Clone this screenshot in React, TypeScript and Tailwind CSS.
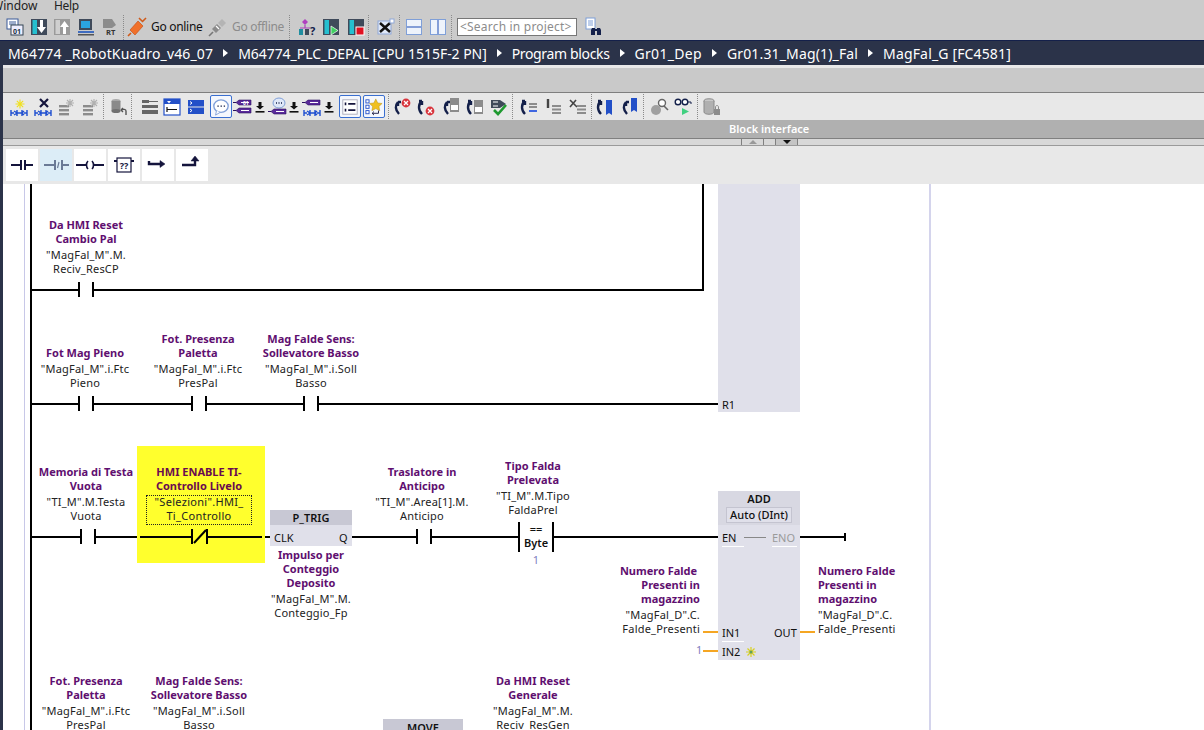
import type { ReactNode } from 'react';

const FONT = "font-['Noto_Sans','Open_Sans',sans-serif]";

const Ico = ({ className = 'w-6', children }: { className?: string; children: ReactNode }) => (
  <div className={`flex shrink-0 items-center justify-center ${className}`}>
    <svg width="20" height="20" viewBox="0 0 20 20">{children}</svg>
  </div>
);

const Sep = ({ className = '' }: { className?: string }) => (
  <div className={`h-[25px] w-px shrink-0 border-l border-dotted border-[#8a8a8a] ${className}`} />
);

// little helpers for the recurring icon parts
const Fbk = ({ c = '#1f4fd0' }: { c?: string }) => (
  <path d="M2 13v6M8 13v6M13 13v6M18 13v6M2 16h3M5 14l3 2-3 2M15 16h3M15 14l-2 2 2 2M8 16h5" stroke={c} strokeWidth="1.4" fill="none" />
);
const Tag = ({ y, c = '#5a2a9a' }: { y: number; c?: string }) => (
  <g>
    <path d={`M6 ${y}h12v5H6l-3-2.5z`} fill={c} stroke="#2a1060" strokeWidth="0.6" />
    <path d={`M8 ${y + 2.5}h8`} stroke="#fff" strokeWidth="1" />
    <path d={`M0 ${y + 2.5}h3`} stroke="#2a1060" strokeWidth="1" />
  </g>
);
const Star = ({ x, y, r = 3.5 }: { x: number; y: number; r?: number }) => (
  <g stroke="#f0e020" strokeWidth="1.2">
    <path d={`M${x - r} ${y}h${r * 2}M${x} ${y - r}v${r * 2}M${x - r * 0.7} ${y - r * 0.7}l${r * 1.4} ${r * 1.4}M${x + r * 0.7} ${y - r * 0.7}l${-r * 1.4} ${r * 1.4}`} />
  </g>
);
const GrayRows = ({ y = 8 }: { y?: number }) => (
  <g fill="#8c8c8c">
    <rect x="2" y={y} width="10" height="2.4" />
    <rect x="2" y={y + 4} width="10" height="2.4" />
    <rect x="2" y={y + 8} width="10" height="2.4" />
  </g>
);
const Spark = ({ x, y, c = '#b0b0b0' }: { x: number; y: number; c?: string }) => (
  <g stroke={c} strokeWidth="1.1">
    <path d={`M${x - 4} ${y}h8M${x} ${y - 4}v8M${x - 3} ${y - 3}l6 6M${x + 3} ${y - 3}l-6 6`} />
  </g>
);
const Hook = ({ flip = false }: { flip?: boolean }) => (
  <path
    d={flip ? 'M6 4C2 7 2 13 6 17M6 4L3 4M6 4L6 8' : 'M6 5C3 8 3 13 7 17M6 5L9 5M6 5L6 9'}
    stroke="#14204a"
    strokeWidth="2.4"
    fill="none"
  />
);
const Err = ({ x, y }: { x: number; y: number }) => (
  <g>
    <circle cx={x} cy={y} r="4.4" fill="#d8353d" />
    <path d={`M${x - 2} ${y - 2}l4 4M${x + 2} ${y - 2}l-4 4`} stroke="#fff" strokeWidth="1.3" />
  </g>
);
const Split = ({ v }: { v?: boolean }) => (
  <g>
    <rect x="2.5" y="2.5" width="15" height="15" fill="#eef3fb" stroke="#7f9fd8" strokeWidth="1" />
    {v ? <path d="M10 3v14" stroke="#3f66c0" strokeWidth="1.2" /> : <path d="M3 10h14" stroke="#3f66c0" strokeWidth="1.2" />}
  </g>
);
const PlcBox = ({ gray, children }: { gray?: boolean; children?: ReactNode }) => (
  <g>
    <rect x="2" y="2" width="16" height="16" fill={gray ? '#9a9a9a' : '#3f4a5a'} />
    <rect x="3.5" y="3" width="4.5" height="14" fill={gray ? '#cfcfcf' : '#25c0d0'} />
    {children}
  </g>
);
const OnBtn = ({ className = '', children }: { className?: string; children: ReactNode }) => (
  <div className={`flex h-[23px] w-[22px] shrink-0 items-center justify-center rounded-[2px] border border-[#3a6fd0] bg-[#f4f7fd] ${className}`}>
    <svg width="18" height="18" viewBox="0 0 20 20">{children}</svg>
  </div>
);
const PullDown = () => (
  <svg width="10" height="12" viewBox="0 0 10 12" className="shrink-0">
    <path d="M3.5 1h3v4H9L5 8.5 1 5h2.500z" fill="#111" />
    <rect x="0.5" y="10" width="9" height="1.600" fill="#111" />
  </svg>
);

const InstrBtn = ({ active, children }: { active?: boolean; children: ReactNode }) => (
  <div className={`flex h-8 w-8 items-center justify-center ${active ? 'bg-[#dcedf7]' : 'bg-white'}`}>
    <svg width="32" height="32" viewBox="0 0 32 32" fill="none" stroke={active ? '#6a7a96' : '#14143c'} strokeWidth="2">
      {children}
    </svg>
  </div>
);

const Crumb = ({ className = '', children }: { className?: string; children: ReactNode }) => (
  <span className={`whitespace-pre ${className}`}>{children}</span>
);
const CrumbArrow = () => (
  <span className="h-0 w-0 shrink-0 border-y-[4px] border-l-[5px] border-y-transparent border-l-white" />
);

// text attached to an instruction on the network canvas
const Label = ({
  className,
  title,
  op,
  align = 'text-center',
}: {
  className: string;
  title: string[];
  op: string[];
  align?: string;
}) => (
  <div className={`absolute text-[11px] leading-[14px] ${align} ${className}`}>
    {title.map((t) => (
      <div key={t} className="whitespace-pre font-bold text-[#5f0f70]">{t}</div>
    ))}
    <div className="mt-[2px] tracking-[0.2px] text-[#222]">
      {op.map((t) => (
        <div key={t} className="whitespace-pre">{t}</div>
      ))}
    </div>
  </div>
);

const Pin = ({ className, children }: { className: string; children: ReactNode }) => (
  <div className={`absolute text-[11px] leading-[14px] ${className}`}>{children}</div>
);
const Wire = ({ className }: { className: string }) => <div className={`absolute h-[2px] bg-black ${className}`} />;
const Bar = ({ className }: { className: string }) => <div className={`absolute w-[2px] bg-black ${className}`} />;

export default function App() {
  return (
    <div className={`flex h-[730px] w-[1204px] flex-col overflow-hidden bg-[#cbcbcb] ${FONT}`}>
      {/* menu */}
      <div className="flex h-[12px] items-center text-[12px] leading-[12px] text-[#222]">
        <span className="-ml-[8px] w-[62px]">Window</span>
        <span className="tracking-[-0.3px]">Help</span>
      </div>

      {/* main toolbar */}
      <div className="flex h-[28px] items-center pt-[2px]">
        <div className="ml-[3px] flex items-center">
          <Ico>
            <rect x="2" y="2" width="11" height="10" fill="#fff" stroke="#3a5a9a" />
            <path d="M4 5h7M4 7h7" stroke="#3a5a9a" />
            <rect x="6" y="8" width="12" height="10" fill="#eef" stroke="#345" />
            <text x="8" y="16.500" fontSize="7" fontWeight="700" fill="#234">01</text>
          </Ico>
          <Ico>
            <PlcBox><path d="M11 3h3v7h3l-4.500 6L8 10h3z" fill="#fff" /></PlcBox>
          </Ico>
          <Ico className="w-[22px]">
            <PlcBox gray><path d="M11 17h3v-7h3l-4.500-6L8 10h3z" fill="#fff" /></PlcBox>
          </Ico>
          <Ico className="w-[25px]">
            <rect x="3" y="2" width="13" height="11" fill="#3f4a5a" />
            <rect x="5" y="4" width="9" height="7" fill="#2aa4e0" />
            <rect x="2" y="14" width="16" height="2" fill="#3f6cc0" />
            <rect x="2" y="17" width="16" height="1.500" fill="#555" />
          </Ico>
          <Ico className="w-[23px]">
            <path d="M3 2h9l4 6-4 3H3z" fill="#8c8c8c" />
            <text x="6" y="18" fontSize="7.500" fontWeight="700" fill="#333">RT</text>
          </Ico>
        </div>
        <Sep className="ml-[2px]" />
        <Ico className="ml-[2px] w-[22px]">
          <path d="M3 13l8-9 5 5-8 9z" fill="#f0702a" stroke="#c04a10" strokeWidth="0.6" />
          <path d="M1 19l3-3M15 5l4-4M12 1l3 3" stroke="#d05a1a" strokeWidth="1.6" />
        </Ico>
        <span className="ml-[3px] w-[55px] text-[12px] tracking-[-0.3px] text-[#111]">Go online</span>
        <Ico className="ml-[1px] w-[22px]">
          <path d="M4 12l5-5 4 4-5 5z" fill="#8a8a8a" />
          <path d="M10 6l4-4 4 4-4 4z" fill="#b4b4b4" />
          <path d="M1 19l4-4" stroke="#777" strokeWidth="1.600" />
          <path d="M8 9l3 3" stroke="#fff" strokeWidth="1.200" />
        </Ico>
        <span className="ml-[3px] w-[55px] text-[12px] tracking-[-0.3px] text-[#8c8c8c]">Go offline</span>
        <Sep className="ml-[2px]" />
        <Ico className="ml-[8px]">
          <path d="M7 2l3 3-3 3-3-3z" fill="#b040c0" />
          <path d="M7 8v3M2 11h10" stroke="#b040c0" strokeWidth="1.200" />
          <rect x="1" y="12" width="4" height="6" fill="#1f8ea0" />
          <rect x="7" y="12" width="4" height="6" fill="#3f4a5a" />
          <text x="12" y="18" fontSize="11" fontWeight="700" fill="#14204a">?</text>
        </Ico>
        <Ico className="w-[26px]">
          <PlcBox><path d="M10 9l7 4.500-7 4.500z" fill="#40d060" stroke="#fff" strokeWidth="0.700" /></PlcBox>
        </Ico>
        <Ico className="w-[24px]">
          <PlcBox><rect x="10" y="10" width="8" height="8" fill="#e01020" stroke="#fff" /></PlcBox>
        </Ico>
        <Sep />
        <Ico className="ml-[6px] w-[22px]">
          <rect x="2" y="4" width="13" height="13" fill="#dfe8f8" stroke="#8fa8d8" />
          <path d="M4 6l10 9M14 6L4 15" stroke="#111" strokeWidth="2.400" />
          <rect x="14" y="2" width="4" height="4" fill="#fff" stroke="#8fa8d8" />
        </Ico>
        <Sep className="ml-[2px]" />
        <Ico className="ml-[2px] w-[24px]"><Split /></Ico>
        <Ico className="w-[23px]"><Split v /></Ico>
        <Sep className="ml-[2px]" />
        <div className="ml-[5px] flex h-[18px] w-[120px] items-center border border-[#777] bg-white pl-[2px] text-[12px] tracking-[0.2px] text-[#8c8c8c]">
          &lt;Search in project&gt;
        </div>
        <Ico className="ml-[7px]">
          <rect x="2" y="1" width="9" height="11" fill="#fff" stroke="#7f9fd8" />
          <path d="M4 4h5M4 6h5M4 8h5" stroke="#7f9fd8" />
          <path d="M8 11h3v7H7v-5zM13 11h3l1 2v5h-4z" fill="#14204a" />
          <rect x="10" y="12" width="4" height="2" fill="#14204a" />
        </Ico>
      </div>

      <div className="flex flex-1 flex-col overflow-hidden border-t border-[#14204a]">
        {/* breadcrumb */}
        <div className="flex h-[24px] shrink-0 items-center gap-[10px] bg-[#2b3349] pl-[8px] text-[14px] text-white">
          <Crumb className="tracking-[0.15px]">M64774 _RobotKuadro_v46_07</Crumb>
          <CrumbArrow />
          <Crumb className="tracking-[-0.05px]">M64774_PLC_DEPAL [CPU 1515F-2 PN]</Crumb>
          <CrumbArrow />
          <Crumb className="tracking-[-0.35px]">Program blocks</Crumb>
          <CrumbArrow />
          <Crumb className="tracking-[0.3px]">Gr01_Dep</Crumb>
          <CrumbArrow />
          <Crumb className="tracking-[0.15px]">Gr01.31_Mag(1)_Fal</Crumb>
          <CrumbArrow />
          <Crumb className="tracking-[0.15px]">MagFal_G [FC4581]</Crumb>
        </div>

        <div className="flex min-h-0 flex-1">
          <div className="w-[3px] shrink-0 bg-[#2b3349]" />
          <div className="flex min-w-0 flex-1 flex-col">
            <div className="h-[3px] shrink-0 bg-[#e8e8e8]" />
            <div className="h-[24px] shrink-0 bg-[#c9c9c9]" />

            {/* editor toolbar */}
            <div className="flex h-[28px] shrink-0 items-center border-t border-[#7f7f7f] bg-[#e8e8e8] pl-[4px]">
              <Ico><Fbk /><Star x={11} y={7} r={4.500} /></Ico>
              <Ico>
                <Fbk />
                <path d="M7 2l8 8M15 2l-8 8" stroke="#14143c" strokeWidth="2.200" />
              </Ico>
              <Ico><GrayRows /><Spark x={13} y={6} /></Ico>
              <Ico><GrayRows /><Spark x={13} y={6} /></Ico>
              <Sep />
              <Ico className="ml-[3px] w-[24px]">
                <ellipse cx="7" cy="4" rx="4.500" ry="2" fill="#a8a8a8" />
                <rect x="2.500" y="4" width="9" height="10" fill="#8a8a8a" />
                <ellipse cx="7" cy="14" rx="4.500" ry="2" fill="#707070" />
                <path d="M17 18v-4c0-2-3-2-5-1M12 13l2-2M12 13l2 2" stroke="#555" strokeWidth="1.400" fill="none" />
              </Ico>
              <Sep />
              <Ico className="ml-[8px]">
                <g fill="#666"><rect x="2" y="3" width="7" height="3" /><rect x="2" y="8" width="16" height="3" /><rect x="2" y="13" width="16" height="4" /><rect x="9" y="4" width="9" height="1" /></g>
              </Ico>
              <Ico>
                <rect x="2" y="2" width="16" height="16" fill="#fff" stroke="#2350c8" strokeWidth="1.200" />
                <rect x="2" y="2" width="16" height="5" fill="#2350c8" />
                <path d="M5 4h4L7 6.500z" fill="#fff" />
                <path d="M5 10v5M5 12.500h10" stroke="#111" strokeWidth="1.200" />
              </Ico>
              <Ico>
                <rect x="2" y="3" width="16" height="6.500" fill="#2350c8" />
                <rect x="2" y="10.500" width="16" height="6.500" fill="#2350c8" />
                <path d="M4 4.500l2 1.500-2 1.500M4 12l2 1.500-2 1.500" stroke="#fff" fill="none" />
              </Ico>
              <OnBtn className="ml-[2px]">
                <ellipse cx="10" cy="9" rx="8" ry="7" fill="#fff" stroke="#7f9fd8" strokeWidth="1.500" />
                <path d="M5 14l-1 5 5-3" fill="#fff" stroke="#7f9fd8" />
                <path d="M6 9h1.500M9.500 9H11M13 9h1.500" stroke="#14204a" strokeWidth="1.600" />
              </OnBtn>
              <Ico className="w-[22px]">
                <Tag y={3} /><Tag y={11} />
                <text x="10" y="7.800" fontSize="5" fontWeight="700" fill="#fff">01</text>
              </Ico>
              <div className="ml-[1px] w-[10px]"><PullDown /></div>
              <Ico className="ml-[1px] w-[24px]">
                <ellipse cx="11" cy="6" rx="6" ry="5" fill="#dfe8f8" stroke="#7f9fd8" />
                <path d="M8 6h1M10.500 6h1M13 6h1" stroke="#14204a" strokeWidth="1.400" />
                <Tag y={12} />
              </Ico>
              <div className="-ml-[1px] w-[10px]"><PullDown /></div>
              <Ico className="ml-[1px] w-[23px]">
                <Tag y={3} />
                <Fbk />
              </Ico>
              <div className="ml-[1px] w-[10px]"><PullDown /></div>
              <OnBtn className="ml-[5px]">
                <rect x="2" y="2" width="16" height="16" fill="#fff" stroke="#aab" />
                <path d="M5 5v3M5 12v3M8 6.500h8M8 13.500h8" stroke="#14143c" strokeWidth="1.800" />
              </OnBtn>
              <OnBtn className="ml-[2px]">
                <rect x="1" y="2" width="3.500" height="3.500" fill="#fff" stroke="#2350c8" />
                <rect x="1" y="8" width="3.500" height="3.500" fill="#fff" stroke="#2350c8" />
                <rect x="1" y="14" width="3.500" height="3.500" fill="#fff" stroke="#2350c8" />
                <path d="M12 1l2.200 4.500 4.800.6-3.500 3.300.9 4.800L12 11.800 7.600 14.200l.9-4.800L5 6.100l4.800-.6z" fill="#f0c020" stroke="#b08a10" strokeWidth="0.500" />
                <path d="M15 14v3H8M8 17l2-2M8 17l2 2" stroke="#14143c" fill="none" />
              </OnBtn>
              <Sep className="ml-[3px]" />
              <Ico className="w-[25px]"><Hook /><Err x={14} y={6} /></Ico>
              <Ico className="w-[24px]"><Hook flip /><Err x={14} y={14} /></Ico>
              <Ico className="w-[25px]">
                <Hook />
                <rect x="9" y="1" width="9" height="14" fill="#8c8c8c" />
                <rect x="10" y="8" width="7" height="5" fill="#fff" />
              </Ico>
              <Ico className="w-[24px]">
                <Hook flip />
                <rect x="9" y="3" width="9" height="14" fill="#8c8c8c" />
                <rect x="10" y="10" width="7" height="5" fill="#fff" />
              </Ico>
              <Ico className="w-[24px]">
                <path d="M2 3h9l6 4-6 4H2z" fill="#3f4a5a" />
                <path d="M4 5h5M4 9h5" stroke="#fff" />
                <path d="M5 13l4 4 8-9" stroke="#1f9a30" strokeWidth="2.600" fill="none" />
              </Ico>
              <Sep className="ml-[1px]" />
              <Ico className="ml-[3px] w-[25px]">
                <Hook flip />
                <path d="M10 7h8M10 10h8" stroke="#8c8c8c" strokeWidth="2" />
                <path d="M10 14h8" stroke="#3f66e0" strokeWidth="2" />
              </Ico>
              <Ico className="w-[24px]">
                <path d="M5 2v9" stroke="#444" strokeWidth="2.400" />
                <path d="M9 9h9M9 12.500h9M9 16h9" stroke="#8c8c8c" strokeWidth="2.200" />
              </Ico>
              <Ico className="w-[25px]">
                <path d="M2 3l7 7M8 3l-6 7" stroke="#444" strokeWidth="1.600" />
                <path d="M9 9h9M9 12.500h9M9 16h9" stroke="#8c8c8c" strokeWidth="2.200" />
              </Ico>
              <Sep className="ml-[1px]" />
              <Ico className="w-[26px]">
                <Hook flip />
                <path d="M11 3h6v15l-3-2-3 2z" fill="#2350c8" />
              </Ico>
              <Ico className="w-[23px]">
                <Hook />
                <path d="M11 1h6v14l-3-2-3 2z" fill="#2350c8" />
              </Ico>
              <Sep className="ml-[2px]" />
              <Ico className="ml-[3px] w-[24px]">
                <circle cx="7" cy="13" r="5" fill="#a0a0a0" />
                <circle cx="13" cy="6" r="3.500" fill="#fff" stroke="#666" strokeWidth="1.400" />
                <path d="M15 9l4 4" stroke="#666" strokeWidth="1.600" />
              </Ico>
              <Ico className="w-[24px]">
                <circle cx="5" cy="5" r="2.800" fill="#fff" stroke="#14204a" strokeWidth="1.400" />
                <circle cx="12" cy="5" r="2.800" fill="#fff" stroke="#14204a" strokeWidth="1.400" />
                <path d="M15 5h3v2" stroke="#14204a" fill="none" />
                <path d="M9 11l7 3.500-7 3.500z" fill="#40d080" />
              </Ico>
              <Sep className="ml-[2px]" />
              <Ico className="ml-[2px] w-[24px]">
                <ellipse cx="7" cy="4" rx="5" ry="2.200" fill="#c8c8c8" stroke="#8a8a8a" />
                <path d="M2 4v11c0 3 10 3 10 0V4" fill="#b0b0b0" stroke="#8a8a8a" />
                <rect x="12" y="12" width="6" height="6" fill="#8c8c8c" />
                <path d="M13.500 12v-2c0-2 3-2 3 0v2" stroke="#8c8c8c" fill="none" />
              </Ico>
            </div>

            {/* section header */}
            <div className="flex h-[18px] shrink-0 items-center bg-[#b0b0b0] pl-[726px] text-[11px] font-semibold text-white">
              Block interface
            </div>
            <div className="flex h-[7px] shrink-0 border-t border-[#808080] bg-[#d8d8d8] pl-[738px]">
              <div className="flex h-full w-[23px] items-center justify-center border-x border-[#808080]">
                <span className="h-0 w-0 border-x-[4px] border-b-[4px] border-x-transparent border-b-[#999]" />
              </div>
              <div className="ml-[11px] flex h-full w-[23px] items-center justify-center border-x border-[#808080] bg-[#c4c4c4]">
                <span className="h-0 w-0 border-x-[4px] border-t-[4px] border-x-transparent border-t-[#111]" />
              </div>
            </div>

            {/* instructions favourites */}
            <div className="flex h-[39px] shrink-0 items-center gap-[2px] border-t border-[#9a9a9a] bg-[#e8e8e8] pl-[3px]">
              <InstrBtn>
                <path d="M5 16h10M15 11v10M19 11v10M19 16h8" />
              </InstrBtn>
              <InstrBtn active>
                <path d="M4 16h11M15 11v10M22 11v10M22 16h7" />
                <path d="M17.500 19l1.500-6" strokeWidth="1.200" />
              </InstrBtn>
              <InstrBtn>
                <path d="M2 16h10M20 16h10" />
                <path d="M14 12c-2 2-2 6 0 8M18 12c2 2 2 6 0 8" strokeWidth="1.600" />
              </InstrBtn>
              <InstrBtn>
                <rect x="9" y="9" width="14" height="14" strokeWidth="1.200" />
                <path d="M6 12h3M23 12h3" />
                <text x="16" y="20" fontSize="9" fontWeight="700" textAnchor="middle" fill="#14143c" stroke="none">??</text>
              </InstrBtn>
              <InstrBtn>
                <path d="M7 12v3h12" strokeWidth="2.400" />
                <path d="M18 11.500l5 3.500-5 3.500z" fill="#14143c" strokeWidth="0.500" />
              </InstrBtn>
              <InstrBtn>
                <path d="M6 16h13v-4" strokeWidth="2.400" />
                <path d="M15 12l4-5 4 5z" fill="#14143c" strokeWidth="0.500" />
              </InstrBtn>
            </div>

            {/* network canvas: coordinates are the diagram itself */}
            <div className="relative min-h-0 flex-1 overflow-hidden bg-white">
              <div className="absolute left-[21px] top-0 h-full w-px bg-[#c8c8e8]" />
              <div className="absolute left-[926px] top-0 h-full w-[2px] bg-[#d4d4ec]" />
              <Bar className="left-[27px] top-0 h-full" />

              {/* network 1 */}
              <div className="absolute left-[715px] top-0 h-[228px] w-[82px] bg-[#e0e0ea]" />
              <Bar className="left-[699px] top-0 h-[107px]" />
              <Label className="left-[23px] top-[34px] w-[120px]" title={['Da HMI Reset', 'Cambio Pal']} op={['"MagFal_M".M.', 'Reciv_ResCP']} />
              <Wire className="left-[28px] top-[105px] w-[47px]" />
              <Bar className="left-[75px] top-[98px] h-[15px]" />
              <Bar className="left-[89px] top-[98px] h-[15px]" />
              <Wire className="left-[90px] top-[105px] w-[610px]" />

              {/* network 2 */}
              <Label className="left-[22px] top-[162px] w-[120px]" title={['Fot Mag Pieno']} op={['"MagFal_M".i.Ftc', 'Pieno']} />
              <Label className="left-[135px] top-[148px] w-[120px]" title={['Fot. Presenza', 'Paletta']} op={['"MagFal_M".i.Ftc', 'PresPal']} />
              <Label className="left-[248px] top-[148px] w-[120px]" title={['Mag Falde Sens:', 'Sollevatore Basso']} op={['"MagFal_M".i.Soll', 'Basso']} />
              <Wire className="left-[28px] top-[219px] w-[47px]" />
              <Bar className="left-[75px] top-[212px] h-[15px]" />
              <Bar className="left-[89px] top-[212px] h-[15px]" />
              <Wire className="left-[90px] top-[219px] w-[98px]" />
              <Bar className="left-[188px] top-[212px] h-[15px]" />
              <Bar className="left-[202px] top-[212px] h-[15px]" />
              <Wire className="left-[203px] top-[219px] w-[97px]" />
              <Bar className="left-[300px] top-[212px] h-[15px]" />
              <Bar className="left-[314px] top-[212px] h-[15px]" />
              <Wire className="left-[315px] top-[219px] w-[400px]" />
              <Pin className="left-[719px] top-[214px] text-[#111]">R1</Pin>

              {/* network 3 */}
              <div className="absolute left-[134px] top-[262px] h-[117px] w-[128px] bg-[#ffff2d]" />
              <Label className="left-[23px] top-[281px] w-[120px]" title={['Memoria di Testa', 'Vuota']} op={['"TI_M".M.Testa', 'Vuota']} />
              <Wire className="left-[28px] top-[352px] w-[49px]" />
              <Bar className="left-[77px] top-[345px] h-[15px]" />
              <Bar className="left-[91px] top-[345px] h-[15px]" />
              <Wire className="left-[92px] top-[352px] w-[42px]" />

              <div className="absolute left-[136px] top-[281px] w-[120px] text-center text-[11px] font-bold leading-[14px] text-[#6a0a50]">
                <div>HMI ENABLE TI-</div>
                <div>Controllo Livelo</div>
              </div>
              <div className="absolute left-[143px] top-[311px] h-[30px] w-[106px] border border-dotted border-[#222] text-center text-[11px] leading-[14px] tracking-[0.3px] text-[#222]">
                <div className="-mt-px">"Selezioni".HMI_</div>
                <div>Ti_Controllo</div>
              </div>
              <Wire className="left-[137px] top-[352px] w-[52px]" />
              <Bar className="left-[188px] top-[345px] h-[15px]" />
              <Bar className="left-[203px] top-[345px] h-[15px]" />
              <svg className="absolute left-[188px] top-[345px]" width="17" height="15" viewBox="0 0 17 15">
                <path d="M3 14L15 1" stroke="#000" strokeWidth="2" />
              </svg>
              <Wire className="left-[204px] top-[352px] w-[55px]" />
              <Wire className="left-[262px] top-[352px] w-[5px]" />

              <div className="absolute left-[267px] top-[326px] h-[36px] w-[82px] bg-[#e0e0ea]">
                <div className="h-[15px] bg-[#c8c8d4] text-center text-[11px] font-semibold leading-[16px] text-[#111]">P_TRIG</div>
              </div>
              <Pin className="left-[271px] top-[347px] text-[#111]">CLK</Pin>
              <Pin className="left-[336px] top-[347px] text-[#111]">Q</Pin>
              <Label className="left-[248px] top-[364px] w-[120px]" title={['Impulso per', 'Conteggio', 'Deposito']} op={['"MagFal_M".M.', 'Conteggio_Fp']} />

              <Label className="left-[359px] top-[281px] w-[120px]" title={['Traslatore in', 'Anticipo']} op={['"TI_M".Area[1].M.', 'Anticipo']} />
              <Wire className="left-[349px] top-[352px] w-[64px]" />
              <Bar className="left-[413px] top-[345px] h-[15px]" />
              <Bar className="left-[427px] top-[345px] h-[15px]" />
              <Wire className="left-[428px] top-[352px] w-[87px]" />

              <Label className="left-[470px] top-[275px] w-[120px]" title={['Tipo Falda', 'Prelevata']} op={['"TI_M".M.Tipo', 'FaldaPrel']} />
              <Bar className="left-[515px] top-[338px] h-[30px]" />
              <Bar className="left-[549px] top-[338px] h-[30px]" />
              <div className="absolute left-[517px] top-[338px] w-[32px] text-center text-[11px] font-semibold leading-[14px] text-[#111]">
                <div>==</div>
                <div>Byte</div>
              </div>
              <div className="absolute left-[517px] top-[369px] w-[32px] text-center text-[11px] leading-[14px] text-[#8080c0]">1</div>
              <Wire className="left-[550px] top-[352px] w-[165px]" />

              {/* ADD box */}
              <div className="absolute left-[715px] top-[307px] h-[169px] w-[82px] bg-[#e0e0ea]">
                <div className="flex h-[34px] flex-col items-center bg-[#d8d8e2] text-[11px] leading-[16px] text-[#111]">
                  <div className="h-[16px] font-semibold">ADD</div>
                  <div className="flex h-[16px] w-[66px] items-center justify-center border border-[#c4c4d0] bg-[#e0e0ea] font-medium">Auto (DInt)</div>
                </div>
              </div>
              <Pin className="left-[719px] top-[347px] text-[#111]">EN</Pin>
              <div className="absolute left-[741px] top-[353px] h-px w-[22px] bg-[#888]" />
              <Pin className="left-[769px] top-[347px] text-[#9a9a9a]">ENO</Pin>
              <div className="absolute left-[719px] top-[362px] h-px w-[22px] bg-white" />
              <div className="absolute left-[769px] top-[362px] h-px w-[25px] bg-white" />
              <Wire className="left-[797px] top-[352px] w-[45px]" />
              <Bar className="left-[841px] top-[349px] h-[8px]" />
              <Pin className="left-[719px] top-[442px] text-[#111]">IN1</Pin>
              <Pin className="left-[771px] top-[442px] text-[#111]">OUT</Pin>
              <Pin className="left-[719px] top-[461px] text-[#111]">IN2</Pin>
              <div className="absolute left-[719px] top-[457px] h-px w-[22px] bg-white" />
              <svg className="absolute left-[742px] top-[462px]" width="12" height="12" viewBox="0 0 12 12">
                <path d="M1 6h10M6 1v10M2.500 2.500l7 7M9.500 2.500l-7 7" stroke="#d8d020" strokeWidth="1.200" />
                <circle cx="6" cy="6" r="1.500" fill="#60a060" />
              </svg>
              <div className="absolute left-[700px] top-[447px] h-[2px] w-[15px] bg-[#f5a623]" />
              <div className="absolute left-[700px] top-[466px] h-[2px] w-[15px] bg-[#f5a623]" />
              <div className="absolute left-[797px] top-[447px] h-[2px] w-[15px] bg-[#f5a623]" />
              <Label className="left-[577px] top-[380px] w-[120px]" align="text-right" title={['Numero Falde ', 'Presenti in', 'magazzino']} op={['"MagFal_D".C.', 'Falde_Presenti']} />
              <Label className="left-[815px] top-[380px] w-[120px]" align="text-left" title={['Numero Falde', 'Presenti in', 'magazzino']} op={['"MagFal_D".C.', 'Falde_Presenti']} />
              <div className="absolute left-[693px] top-[459px] text-[11px] leading-[14px] text-[#8080c0]">1</div>

              {/* network 4 */}
              <Label className="left-[23px] top-[490px] w-[120px]" title={['Fot. Presenza', 'Paletta']} op={['"MagFal_M".i.Ftc', 'PresPal']} />
              <Label className="left-[136px] top-[490px] w-[120px]" title={['Mag Falde Sens:', 'Sollevatore Basso']} op={['"MagFal_M".i.Soll', 'Basso']} />
              <Label className="left-[470px] top-[490px] w-[120px]" title={['Da HMI Reset', 'Generale']} op={['"MagFal_M".M.', 'Reciv_ResGen']} />
              <div className="absolute left-[380px] top-[535px] h-[20px] w-[80px] bg-[#c8c8d4] text-center text-[11px] font-semibold leading-[17px] text-[#111]">MOVE</div>
            </div>
          </div>
        </div>
      </div>
    </div>
  );
}
